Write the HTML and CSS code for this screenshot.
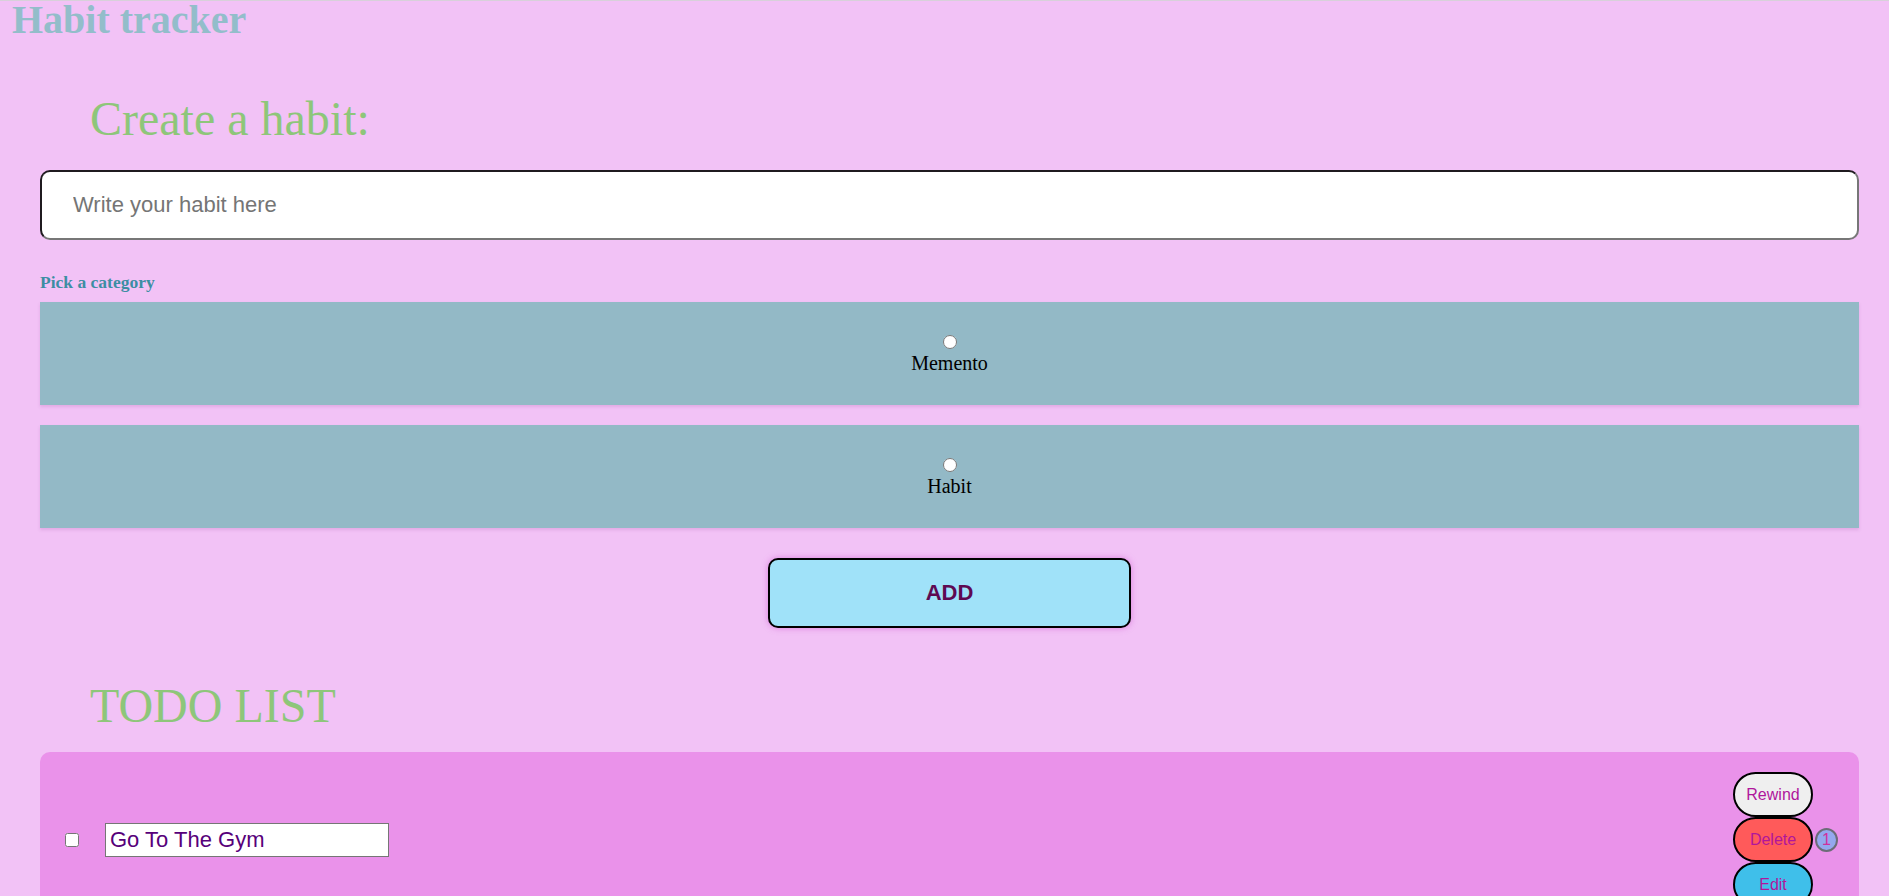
FILE: index.html
```html
<!DOCTYPE html>
<html lang="en">
<head>
<meta charset="utf-8">
<title>Habit tracker</title>
<link rel="stylesheet" href="styles.css">
</head>
<body>
<h1 class="app-title">Habit tracker</h1>
<main class="main">
  <h2 class="section-title">Create a habit:</h2>
  <form class="habit-form">
    <input class="habit-input" type="text" placeholder="Write your habit here">
    <span class="category-label">Pick a category</span>
    <label class="category-option">
      <input class="category-radio" type="radio" name="category" value="memento">
      <span class="category-name">Memento</span>
    </label>
    <label class="category-option">
      <input class="category-radio" type="radio" name="category" value="habit">
      <span class="category-name">Habit</span>
    </label>
    <div class="add-row">
      <button class="add-button" type="button">ADD</button>
    </div>
  </form>

  <h2 class="section-title todo-title">TODO LIST</h2>
  <ul class="todo-list">
    <li class="todo-card">
      <input class="todo-check" type="checkbox">
      <input class="todo-text" type="text" value="Go To The Gym">
      <div class="todo-spacer"></div>
      <div class="todo-actions">
        <button class="pill pill-rewind" type="button">Rewind</button>
        <div class="delete-row">
          <button class="pill pill-delete" type="button">Delete</button>
          <span class="count-badge">1</span>
        </div>
        <button class="pill pill-edit" type="button">Edit</button>
      </div>
    </li>
  </ul>
</main>
</body>
</html>
```

FILE: styles.css
```css
html, body {
  margin: 0;
  padding: 0;
}

body {
  background: #f2c2f6;
  border-top: 1px solid #d8d0da;
  font-family: "Liberation Serif", "Times New Roman", serif;
  overflow: hidden;
  height: 895px;
}

.app-title {
  margin: 0;
  padding-left: 12px;
  font-family: "Liberation Serif", "Times New Roman", serif;
  font-size: 40px;
  line-height: 37px;
  font-weight: bold;
  color: #93bdca;
}

.main {
  padding: 0 30px 0 40px;
}

.section-title {
  margin: 53px 0 0 50px;
  font-family: "Liberation Serif", "Times New Roman", serif;
  font-size: 48px;
  line-height: 56px;
  font-weight: normal;
  color: #8ec67a;
}

.habit-form {
  display: flex;
  flex-direction: column;
  margin: 0;
}

.habit-input {
  box-sizing: border-box;
  width: 100%;
  height: 70px;
  margin-top: 23px;
  padding: 0 0 0 31px;
  border: 2px solid;
  border-color: #1f1a1f #777777 #777777 #1f1a1f;
  border-radius: 10px;
  background: #ffffff;
  font-family: "Liberation Sans", Arial, sans-serif;
  font-size: 22px;
  color: #333333;
  outline: none;
}

.habit-input::placeholder {
  color: #757575;
}

.category-label {
  display: block;
  margin-top: 32px;
  font-size: 17.5px;
  line-height: 20px;
  font-weight: bold;
  color: #3c8ea3;
}

.category-option {
  display: flex;
  flex-direction: column;
  align-items: center;
  justify-content: center;
  height: 103px;
  margin-top: 10px;
  background: #93b9c6;
  box-shadow: 0 2px 3px rgba(150, 60, 150, 0.18);
}

.category-option + .category-option {
  margin-top: 20px;
}

.category-radio {
  width: 14px;
  height: 14px;
  margin: 2px 0 2px 0;
}

.category-name {
  font-size: 20px;
  line-height: 24px;
  color: #000000;
}

.add-row {
  display: flex;
  justify-content: center;
  margin-top: 30px;
}

.add-button {
  box-sizing: border-box;
  width: 363px;
  height: 70px;
  border: 2px solid #000000;
  border-radius: 10px;
  background: #a0e2f9;
  color: #5e0a52;
  font-family: "Liberation Sans", Arial, sans-serif;
  font-size: 22px;
  font-weight: bold;
  box-shadow: 0 0 6px rgba(200, 70, 200, 0.55);
  cursor: pointer;
}

.todo-title {
  margin-top: 50px;
}

.todo-list {
  list-style: none;
  margin: 18px 0 0 0;
  padding: 0;
}

.todo-card {
  display: flex;
  align-items: center;
  padding: 20px 21px;
  border-radius: 10px;
  background: #ea92ea;
}

.todo-check {
  width: 14px;
  height: 14px;
  margin: 3px 3px 3px 4px;
}

.todo-text {
  box-sizing: border-box;
  width: 284px;
  height: 34px;
  margin-left: 23px;
  padding: 0 4px;
  border: 1px solid #767676;
  border-radius: 0;
  background: #ffffff;
  font-family: "Liberation Sans", Arial, sans-serif;
  font-size: 22px;
  color: #57007a;
}

.todo-spacer {
  flex: 1;
}

.todo-actions {
  display: flex;
  flex-direction: column;
  align-items: flex-start;
}

.delete-row {
  display: flex;
  align-items: center;
}

.pill {
  box-sizing: border-box;
  width: 80px;
  height: 45px;
  padding: 0;
  border: 2px solid #000000;
  border-radius: 23px;
  font-family: "Liberation Sans", Arial, sans-serif;
  font-size: 16px;
  color: #b0169c;
  cursor: pointer;
}

.pill-rewind {
  background: #efefef;
}

.pill-delete {
  background: #ff5a5a;
}

.pill-edit {
  background: #3fbfea;
}

.count-badge {
  box-sizing: border-box;
  display: flex;
  align-items: center;
  justify-content: center;
  width: 23px;
  height: 24px;
  margin-left: 2px;
  border: 2px solid #6c6c78;
  border-radius: 50%;
  background: #94a8ee;
  font-family: "Liberation Sans", Arial, sans-serif;
  font-size: 16px;
  color: #d0309e;
}
```
